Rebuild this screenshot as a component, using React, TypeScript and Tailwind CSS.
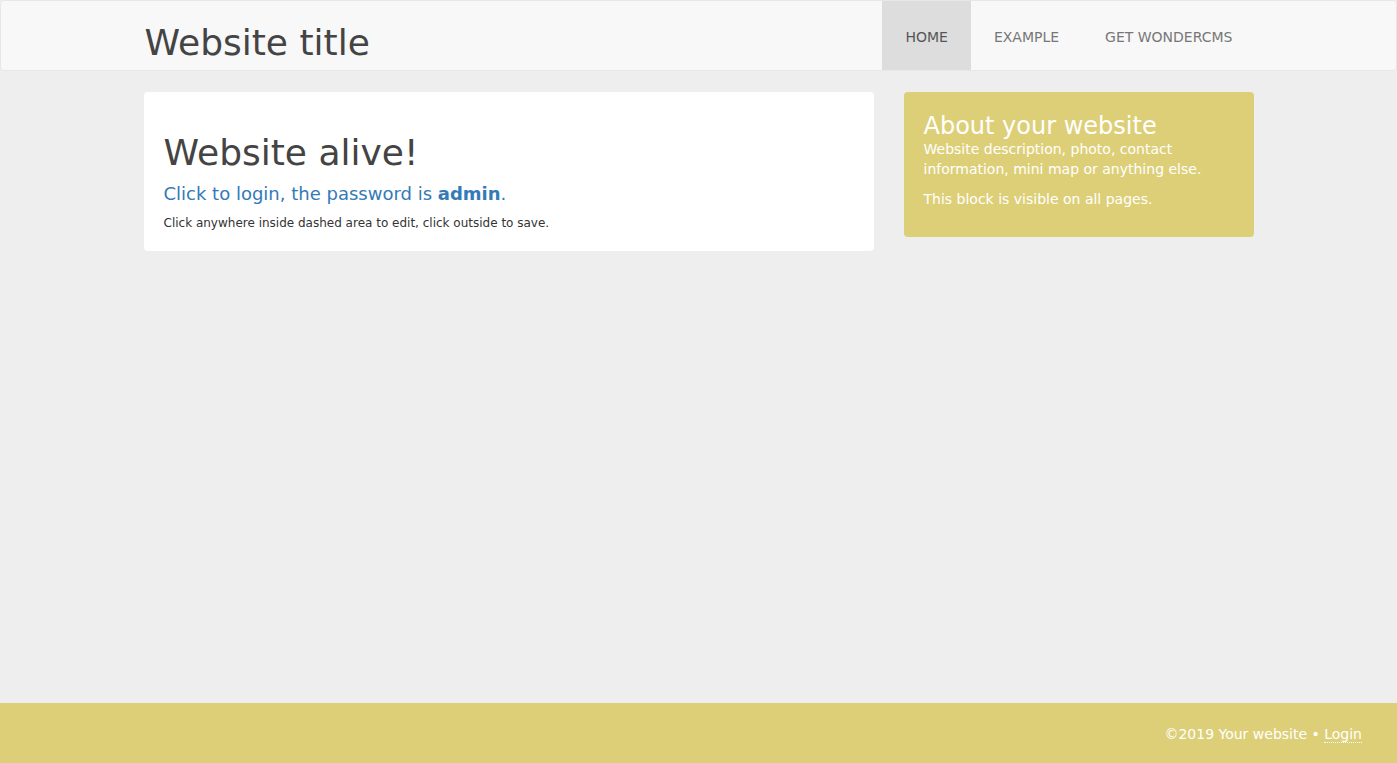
export default function App() {
  return (
    <div className="flex min-h-screen flex-col bg-[#eeeeee] text-[#444] [font-family:'DejaVu_Sans',Verdana,sans-serif]">
      <nav className="h-[71px] rounded-[4px] border border-[#e7e7e7] bg-[#f8f8f8]">
        <div className="mx-auto flex h-full w-[1110px] items-stretch justify-between">
          <div className="flex items-center pl-[1px] pt-[14px] text-[36px] text-[#444]">Website title</div>
          <ul className="flex items-stretch text-[14px] uppercase text-[#777]">
            <li className="flex items-center bg-[#dddddd] px-[23px] pt-[4px] text-[#555]">Home</li>
            <li className="flex items-center px-[23px] pt-[4px]">Example</li>
            <li className="flex items-center pl-[23px] pr-[21px] pt-[4px]">Get WonderCMS</li>
          </ul>
        </div>
      </nav>
      <main className="flex-1">
        <div className="mx-auto mt-[21px] flex w-[1110px] items-start gap-[30px]">
          <div className="w-[730px] rounded-[4px] bg-white px-[20px] pb-[19px] pt-[41px]">
            <h1 className="text-[36px] leading-[40px] text-[#444]">Website alive!</h1>
            <h4 className="mt-[10px] text-[18px] leading-[22px] text-[#337ab7]">
              Click to login, the password is <b>admin</b>.
            </h4>
            <p className="mt-[10px] text-[12px] leading-[17px] text-[#333]">
              Click anywhere inside dashed area to edit, click outside to save.
            </p>
          </div>
          <div className="w-[350px] rounded-[4px] bg-[#ddcf77] px-[20px] pb-[28px] pt-[21px] text-white">
            <h3 className="text-[24px] leading-[26px]">About your website</h3>
            <p className="text-[14px] leading-[20px]">
              Website description, photo, contact information, mini map or anything else.
            </p>
            <p className="mt-[10px] text-[14px] leading-[20px]">This block is visible on all pages.</p>
          </div>
        </div>
      </main>
      <footer className="flex h-[60px] items-center justify-end bg-[#ddcf77] pr-[35px] pt-[2px] text-[14px] text-white">
        <span>
          ©2019 Your website • <span className="border-b border-dotted border-white">Login</span>
        </span>
      </footer>
    </div>
  );
}
